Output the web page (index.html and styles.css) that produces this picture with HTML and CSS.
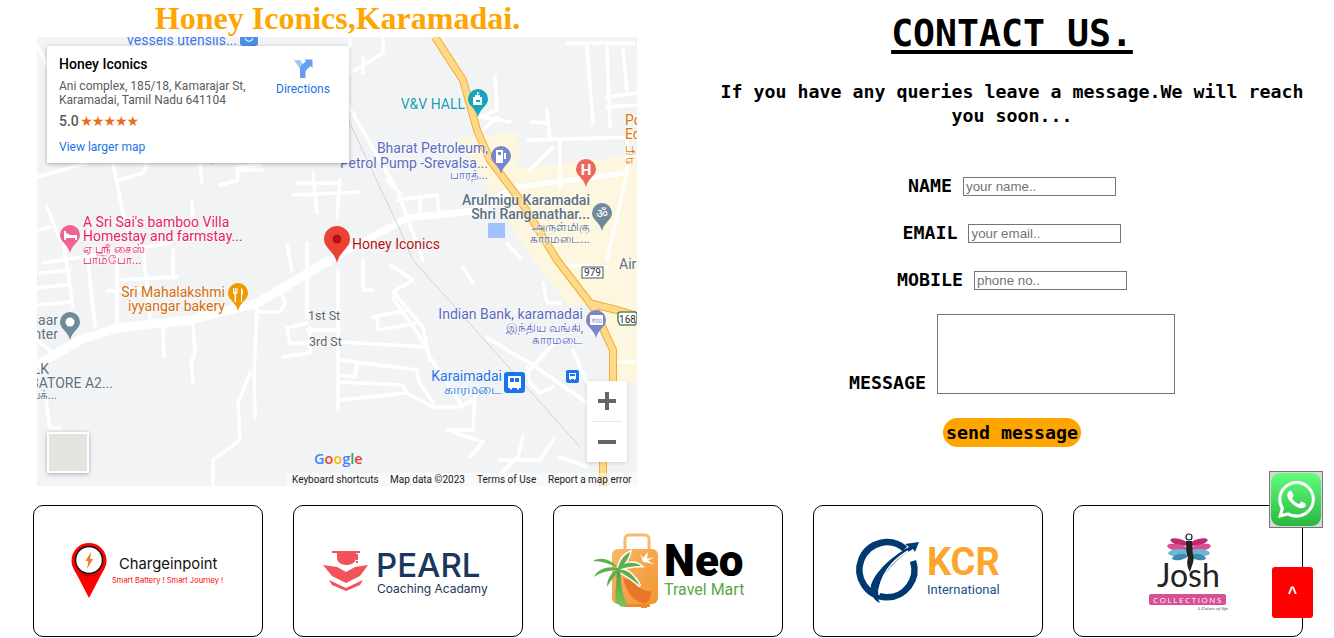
FILE: index.html
```html
<!DOCTYPE html>
<html lang="en">
<head>
    <meta charset="UTF-8">
    <meta name="viewport" content="width=device-width, initial-scale=1.0">
    <title>Contact Us - Honey Iconics</title>
    <link rel="stylesheet" href="styles.css">
</head>
<body>
    <div class="top">
        <section class="location">
            <h2 class="location-title">Honey Iconics,Karamadai.</h2>
            <div class="map">
                <!-- drawn in page coordinates, shifted by the map's own offset -->
                <svg class="map-art" width="600" height="450" viewBox="37 37 600 450">
                    <defs>
                        <path id="pin" d="M10 0a10 10 0 0 1 10 10c0 3.4-1.7 5.400-3.600 7.600-2.500 2.900-5.300 5.900-6.400 10.400-1.100-4.500-3.900-7.500-6.400-10.400C1.700 15.400 0 13.400 0 10A10 10 0 0 1 10 0z"/>
                    </defs>
                    <rect x="37" y="37" width="600" height="450" fill="#f1f3f4"/>
                    <path class="beige" d="M457 138L517 132L520 153L517 168L637 155V383H616L606 330L590 303L570 307L533 260L505 215Z"/>
                    <path class="water" d="M488 223H505V238H488Z"/>
                    <path class="roads" d="M37 45L47 65M37 177L87 163M113 163L123 213L130 233M120 180L143 173L147 163M200 163L202 183M220 185L238 180L237 167L260 165M298 183H340M313 173L317 213M293 195L360 192M340 180L337 217M192 200L193 227M47 207L60 240M37 230L50 227M63 240L73 307M43 263L170 243M40 273L70 270M37 288L67 285M37 305L70 302M88 260L95 327M117 257V323M143 247L150 318M107 291L148 288M117 280L177 277M173 250V277M163 327L164 357M193 323L195 353L191 363L193 383M257 307L254 373L255 417M250 373L238 403L240 440L213 460V486M257 312H280L285 303L280 290M287 245L292 270M307 243V317M287 328L307 323M307 330H340M287 328L290 343H310M310 327V353L283 357M338 270V410M37 340L53 353M45 393L50 428H60M383 37V53L350 73M363 57V73M350 40L347 103L397 190L423 260M495 77L497 110L480 117M483 117L510 122M483 130L497 117M547 110L550 140M532 122L548 123M528 140L637 137M567 43H633M587 47L593 123M607 47L610 127M623 50L627 90M607 97L637 93M607 107L637 105M560 140V187M530 170L553 147M398 200L437 195L440 217M420 197V213M387 180L400 193M507 243L520 257M363 260V290H373M463 267L473 283M390 265L413 280L393 292L423 327L430 360M393 298L420 337L430 357L460 403M373 317L407 310M377 317L378 330L417 323M340 342L427 347M340 360L417 370M357 363L355 377L340 375M340 382L403 385L407 393L433 407H460L473 400M340 400L407 393M417 373L420 383L433 403M475 393L473 430H447M453 432L483 442L470 457M523 437L518 457L497 477M553 440L540 460H500M560 457L587 467M487 338L530 363L573 393L588 403M527 373L557 340M527 367L530 383L540 393L553 387M543 283L547 303H560M573 350L587 383M617 362H633M560 265L607 267M627 130V173L607 260M240 170H262M250 165L258 150"/>
                    <path class="roads-main" d="M37 365L80 340L117 328L190 320L257 303L330 260"/>
                    <path class="roads-mid" d="M330 260L407 218L473 211L517 187"/>
                    <path class="roads-side" d="M517 187L627 173"/>
                    <path class="rail" d="M347 117L400 230L413 260L580 447"/>
                    <path class="highway-edge" d="M435 37L463 80L477 130L490 160L520 200L557 260L593 307L613 350V383M603 462V487M588 303L617 310L637 316"/>
                    <path class="highway" d="M435 37L463 80L477 130L490 160L520 200L557 260L593 307L613 350V383M603 462V487M588 303L617 310L637 316"/>

                    <rect class="shop" x="240" y="33" width="18" height="13" rx="3"/>
                    <path d="M245 38c0 5 8 5 8 0h-1c0 3.500-6 3.500-6 0z" fill="#fff"/>
                    <path class="shop" d="M209 158h8l-4 6z"/>
                    <text class="lbl lbl-blue" x="237" y="45" text-anchor="end">vessels utensils...</text>

                    <use href="#pin" x="468" y="89" class="pin-teal"/>
                    <path d="M473 105V97h2v-2h2v-3l3 1-2 1v1h2v2h2v8zM476 100v2h4v-2z" fill="#fff"/>
                    <text class="lbl lbl-teal" x="465" y="109" text-anchor="end">V&amp;V HALL</text>

                    <use href="#pin" x="491" y="146" class="pin-purple"/>
                    <path d="M496 150h7v13h-7zM498 152v3h3v-3zM504 153h2v6h-2z" fill="#fff"/>
                    <text class="lbl lbl-purple" x="488" y="153" text-anchor="end">Bharat Petroleum,</text>
                    <text class="lbl lbl-purple" x="488" y="168" text-anchor="end">Petrol Pump -Srevalsa...</text>
                    <text class="lbl-sm lbl-purple" x="488" y="179" text-anchor="end">பாரத்...</text>

                    <use href="#pin" x="576" y="159" class="pin-red"/>
                    <text class="pin-letter" x="586" y="175" text-anchor="middle">H</text>

                    <use href="#pin" x="592" y="203" class="pin-slate"/>
                    <text class="pin-om" x="602" y="218" text-anchor="middle">ॐ</text>
                    <text class="lbl lbl-slate lbl-bold" x="590" y="205" text-anchor="end">Arulmigu Karamadai</text>
                    <text class="lbl lbl-slate lbl-bold" x="590" y="219" text-anchor="end">Shri Ranganathar...</text>
                    <text class="lbl-sm lbl-slate" x="590" y="231" text-anchor="end">அருள்மிகு</text>
                    <text class="lbl-sm lbl-slate" x="590" y="243" text-anchor="end">காரமடை...</text>

                    <use href="#pin" x="60" y="225" class="pin-pink"/>
                    <path d="M64 231v9h2v-2h9v2h2v-5h-8v-1l-3-1v-2z" fill="#fff"/>
                    <text class="lbl lbl-pink" x="83" y="227">A Sri Sai's bamboo Villa</text>
                    <text class="lbl lbl-pink" x="83" y="241">Homestay and farmstay...</text>
                    <text class="lbl-sm lbl-pink" x="83" y="253">ஏ ஸ்ரீ சைஸ்</text>
                    <text class="lbl-sm lbl-pink" x="83" y="264">பாம்போ...</text>

                    <use href="#pin" x="228" y="283" class="pin-orange"/>
                    <path d="M233 288v5l1.500 1.500V302h1.500v-7.500l1.500-1.500v-5h-1v4h-.8v-4h-1v4H234v-4zM241 288c1.800.5 2 3 2 5v1.500h-1V302h-1z" fill="#fff"/>
                    <text class="lbl lbl-orange" x="225" y="297" text-anchor="end">Sri Mahalakshmi</text>
                    <text class="lbl lbl-orange" x="225" y="311" text-anchor="end">iyyangar bakery</text>

                    <use href="#pin" x="60" y="312" class="pin-slate"/>
                    <circle cx="70" cy="322" r="4.500" fill="#fff"/>
                    <text class="lbl lbl-slate" x="58" y="325" text-anchor="end">Baar</text>
                    <text class="lbl lbl-slate" x="58" y="339" text-anchor="end">Center</text>
                    <text class="lbl lbl-slate" x="49" y="374" text-anchor="end">ELK</text>
                    <text class="lbl lbl-slate" x="113" y="388" text-anchor="end">COIMBATORE A2...</text>
                    <text class="lbl-sm lbl-slate" x="57" y="399" text-anchor="end">கோவைக்...</text>

                    <text class="lbl-street" x="308" y="320">1st St</text>
                    <text class="lbl-street" x="309" y="346">3rd St</text>

                    <use href="#pin" x="586" y="310" class="pin-purple"/>
                    <rect x="590" y="315" width="13" height="10" rx="1" fill="#fff"/>
                    <text class="pin-bank" x="597" y="323" text-anchor="middle">₹00</text>
                    <text class="lbl lbl-purple" x="583" y="319" text-anchor="end">Indian Bank, karamadai</text>
                    <text class="lbl-sm lbl-purple" x="583" y="332" text-anchor="end">இந்திய வங்கி,</text>
                    <text class="lbl-sm lbl-purple" x="583" y="344" text-anchor="end">காரமடை</text>

                    <rect class="bus-stop" x="504" y="372" width="21" height="21" rx="3"/>
                    <path d="M509 376h11a1 1 0 0 1 1 1v11h-2v1.500h-2V388h-5v1.500h-2V388h-2v-11a1 1 0 0 1 1-1zM510 378v4h4v-4zM515 378v4h4v-4z" fill="#fff"/>
                    <rect class="bus-stop" x="566" y="370" width="13" height="13" rx="2"/>
                    <path d="M569 373h7v6h-1v1h-1v-1h-3v1h-1v-1h-1zM570 374v2h5v-2z" fill="#fff"/>
                    <text class="lbl lbl-bus" x="502" y="381" text-anchor="end">Karaimadai</text>
                    <text class="lbl lbl-bus" x="502" y="394" text-anchor="end">காரமடை</text>

                    <text class="lbl lbl-slate" x="619" y="269">Air</text>
                    <text class="lbl lbl-edu" x="625" y="125">Po</text>
                    <text class="lbl lbl-edu" x="625" y="139">Ed</text>
                    <text class="lbl-sm lbl-edu" x="625" y="152">பூ</text>
                    <text class="lbl-sm lbl-edu" x="625" y="164">எ</text>

                    <rect class="shield" x="582" y="267" width="21" height="11"/>
                    <text class="shield-text" x="592.500" y="276" text-anchor="middle">979</text>
                    <path class="shield-green" d="M618 313l2-1h15l2 1v8l-2 4h-15l-2-4z"/>
                    <text class="shield-text" x="627.500" y="323" text-anchor="middle">168</text>

                    <path class="marker" d="M337 226a13 13 0 0 1 13 13c0 4.500-2.500 7.200-5 10.400-3.200 3.800-6.500 7-8 13.600-1.500-6.600-4.800-9.800-8-13.600-2.500-3.200-5-5.900-5-10.400a13 13 0 0 1 13-13z"/>
                    <circle cx="337" cy="239" r="4.500" fill="#b31412"/>
                    <text class="lbl lbl-marker" x="352" y="249">Honey Iconics</text>

                    <text class="map-logo" x="314" y="464"><tspan fill="#4285f4">G</tspan><tspan fill="#ea4335">o</tspan><tspan fill="#fbbc04">o</tspan><tspan fill="#4285f4">g</tspan><tspan fill="#34a853">l</tspan><tspan fill="#ea4335">e</tspan></text>
                    <rect x="287" y="473" width="350" height="14" fill="#fff" fill-opacity=".5"/>
                    <text class="map-foot" x="292" y="483">Keyboard shortcuts</text>
                    <text class="map-foot" x="390" y="483">Map data ©2023</text>
                    <text class="map-foot" x="477" y="483">Terms of Use</text>
                    <text class="map-foot" x="548" y="483">Report a map error</text>
                </svg>

                <div class="place-card">
                    <div class="place-info">
                        <div class="place-name">Honey Iconics</div>
                        <div class="place-address">Ani complex, 185/18, Kamarajar St, Karamadai, Tamil Nadu 641104</div>
                        <div class="place-rating">5.0 <span class="stars">★★★★★</span></div>
                        <a class="place-link">View larger map</a>
                    </div>
                    <div class="place-directions">
                        <svg width="20" height="20" viewBox="0 0 20 20">
                            <path d="M1 1h6l5 7v11H7V10z" fill="#a6c8f5"/>
                            <path d="M7 19V10c0-3 2-4.500 4-6l2-2-2-1.500h8.500V9L17.500 7l-2 2C13 11 12.500 12 12.500 14v5z" fill="#669df6"/>
                        </svg>
                        <span>Directions</span>
                    </div>
                </div>
                <div class="pegman"></div>
                <div class="zoom-box">
                    <svg width="40" height="81" viewBox="0 0 40 81">
                        <path d="M18 11h4v7h7v4h-7v7h-4v-7h-7v-4h7z" fill="#666"/>
                        <path d="M5 40.500h30" stroke="#e6e6e6"/>
                        <path d="M11 59h18v4H11z" fill="#666"/>
                    </svg>
                </div>
            </div>
        </section>

        <section class="contact">
            <h1 class="contact-title">CONTACT US.</h1>
            <p class="contact-text">If you have any queries leave a message.We will reach you soon...</p>
            <form class="contact-form">
                <div class="form-row"><label>NAME</label><input type="text" placeholder="your name.."></div>
                <div class="form-row"><label>EMAIL</label><input type="text" placeholder="your email.."></div>
                <div class="form-row"><label>MOBILE</label><input type="text" placeholder="phone no.."></div>
                <div class="form-row form-row-message"><label>MESSAGE</label><textarea></textarea></div>
                <button class="send-btn" type="button">send message</button>
            </form>
        </section>
    </div>

    <div class="clients">
        <div class="client-card">
            <svg width="228" height="130" viewBox="34 506 228 130">
                <path d="M89 543a17.500 17.500 0 0 1 17.500 17.500c0 6-3 10-5.500 14.500l-12 23-12-23c-2.500-4.500-5.500-8.500-5.500-14.500A17.500 17.500 0 0 1 89 543z" fill="#f00"/>
                <circle cx="89" cy="560" r="13.500" fill="#fff" stroke="#111" stroke-width="1.500"/>
                <path d="M91 552l-5.500 9h3l-1.500 8 6-10h-3z" fill="#f47a1f"/>
                <path d="M80 574c5 2.500 13 2.500 18 0" fill="none" stroke="#900" stroke-width=".8"/>
                <text class="logo-charge" x="119" y="569">Chargeinpoint</text>
                <text class="logo-charge-sub" x="112" y="583">Smart Battery ! Smart Journey !</text>
            </svg>
        </div>
        <div class="client-card">
            <svg width="228" height="130" viewBox="294 506 228 130">
                <path d="M332 551h28v2h-4v5c0 4-4 7-9.500 7s-9.500-3-9.500-7v-5h-5z" fill="#f4525a"/>
                <path d="M356 554h2v6h-2zM356 561h2v2h-2z" fill="#f4525a"/>
                <path d="M323 565l14 2 9 5 9-5 13-2-8 11-14 7-14-7z" fill="#f4525a"/>
                <path d="M329 580l17 8 17-8-3 5-14 6-14-6z" fill="#f4525a"/>
                <text class="logo-pearl" x="376" y="577">PEARL</text>
                <text class="logo-pearl-sub" x="377" y="593">Coaching Acadamy</text>
            </svg>
        </div>
        <div class="client-card">
            <svg width="228" height="130" viewBox="554 506 228 130">
                <defs>
                    <linearGradient id="bag-fill" x1="0" y1="0" x2="1" y2="1">
                        <stop offset="0" stop-color="#fbb768"/>
                        <stop offset="1" stop-color="#f19530"/>
                    </linearGradient>
                    <linearGradient id="trunk-fill" x1="0" y1="0" x2="0" y2="1">
                        <stop offset="0" stop-color="#4f9f3f"/>
                        <stop offset="1" stop-color="#7cc25a"/>
                    </linearGradient>
                </defs>
                <path d="M625 550v-11a4 4 0 0 1 4-4h16a4 4 0 0 1 4 4v11" fill="none" stroke="#fbb868" stroke-width="3"/>
                <rect x="612" y="549" width="46" height="55" rx="6" fill="url(#bag-fill)"/>
                <path d="M624 604h26v3h-3v1h-6v-1h-17zM628 604h-8" fill="#f0892a"/>
                <path d="M623 578c3 12 9 22 19 25 6 0 9-2 9-12-6 1-14-3-19-11z" fill="#e8752a"/>
                <path d="M640 553l3 5 5-6-1 7 7-2-6 4 7 3-12-2z" fill="#fff"/>
                <g class="palm-halo">
                    <path d="M618 568C625 561 636 562 641 566C633 566 625 567 619 570z"/>
                    <path d="M619 570C628 568 636 578 640 586C633 580 626 575 618 571z"/>
                    <path d="M618 568C620 560 625 554 630 552C629 558 625 564 619 569z"/>
                </g>
                <path d="M616 569c2 13-2 23 0 34l6 4 6-2c-7-10-7-25-8-36z" fill="url(#trunk-fill)"/>
                <g class="palm">
                    <path d="M618 568C610 558 600 557 593 561C602 561 610 564 618 568z"/>
                    <path d="M618 568C606 565 596 571 594 577C601 572 610 570 618 570z"/>
                    <path d="M618 569C610 573 607 580 607 587C611 580 615 575 619 571z"/>
                    <path d="M618 568C620 560 625 554 630 552C629 558 625 564 619 569z"/>
                    <path d="M618 568C625 561 636 562 641 566C633 566 625 567 619 570z"/>
                    <path d="M619 570C628 568 636 578 640 586C633 580 626 575 618 571z"/>
                </g>
                <text class="logo-neo" x="664" y="576">Neo</text>
                <text class="logo-neo-sub" x="664" y="595">Travel Mart</text>
            </svg>
        </div>
        <div class="client-card">
            <svg width="228" height="130" viewBox="814 506 228 130">
                <path d="M905 549A27.500 27.500 0 1 0 913 561" fill="none" stroke="#003a70" stroke-width="6.500"/>
                <path d="M919 542l-14 2 4 3c-17 9-34 25-38 38-2 7 2 15 9 18-4-7-2-18 4-27 7-11 19-22 29-27l2 3z" fill="#003a70"/>
                <path d="M908 551c-15 9-29 24-29 44" fill="none" stroke="#fff" stroke-width="1.500"/>
                <text class="logo-kcr" x="927" y="575">KCR</text>
                <text class="logo-kcr-sub" x="927" y="594">International</text>
            </svg>
        </div>
        <div class="client-card">
            <svg width="228" height="130" viewBox="1074 506 228 130">
                <ellipse cx="1179" cy="542" rx="9" ry="3" transform="rotate(15 1179 542)" fill="#c2286f"/>
                <ellipse cx="1177" cy="547.500" rx="10" ry="3.500" transform="rotate(10 1177 547.500)" fill="#d94f94"/>
                <ellipse cx="1178" cy="552.500" rx="10" ry="3.500" transform="rotate(-5 1178 552.500)" fill="#6cb8d0"/>
                <ellipse cx="1180" cy="557" rx="8" ry="3" transform="rotate(-10 1180 557)" fill="#3f8bac"/>
                <ellipse cx="1199" cy="542" rx="9" ry="3" transform="rotate(-15 1199 542)" fill="#c2286f"/>
                <ellipse cx="1201" cy="547.500" rx="10" ry="3.500" transform="rotate(-10 1201 547.500)" fill="#d94f94"/>
                <ellipse cx="1200" cy="552.500" rx="10" ry="3.500" transform="rotate(5 1200 552.500)" fill="#6cb8d0"/>
                <ellipse cx="1198" cy="557" rx="8" ry="3" transform="rotate(10 1198 557)" fill="#3f8bac"/>
                <circle cx="1189" cy="537" r="3" fill="none" stroke="#222" stroke-width="1.200"/>
                <path d="M1186 541h6c1 5 0 9 1 14 2 5-1 10-3 17-2-3-4-9-2-14-2-5-2-11-2-17z" fill="#222"/>
                <text class="logo-josh" x="1157" y="587">Josh</text>
                <rect x="1149" y="594" width="77" height="11" rx="2" fill="#d94f94"/>
                <text class="logo-josh-bar" x="1188" y="602.500" text-anchor="middle">COLLECTIONS</text>
                <text class="logo-josh-tag" x="1197" y="610">A Colors of life</text>
            </svg>
        </div>
    </div>

    <a class="whatsapp-btn">
        <span class="whatsapp-icon">
            <svg width="37" height="37" viewBox="0 0 24 24">
                <path d="M17.472 14.382c-.297-.149-1.758-.867-2.03-.967-.273-.099-.471-.148-.67.15-.197.297-.767.966-.94 1.164-.173.199-.347.223-.644.075-.297-.15-1.255-.463-2.39-1.475-.883-.788-1.48-1.761-1.653-2.059-.173-.297-.018-.458.13-.606.134-.133.298-.347.446-.52.149-.174.198-.298.298-.497.099-.198.05-.371-.025-.52-.075-.149-.669-1.612-.916-2.207-.242-.579-.487-.5-.669-.51-.173-.008-.371-.01-.57-.01-.198 0-.52.074-.792.372-.272.297-1.04 1.016-1.04 2.479 0 1.462 1.065 2.875 1.213 3.074.149.198 2.096 3.2 5.077 4.487.709.306 1.262.489 1.694.625.712.227 1.36.195 1.871.118.571-.085 1.758-.719 2.006-1.413.248-.694.248-1.289.173-1.413-.074-.124-.272-.198-.57-.347m-5.421 7.403h-.004a9.87 9.87 0 01-5.031-1.378l-.361-.214-3.741.982.998-3.648-.235-.374a9.86 9.86 0 01-1.51-5.26c.001-5.45 4.436-9.884 9.888-9.884 2.64 0 5.122 1.03 6.988 2.898a9.825 9.825 0 012.893 6.994c-.003 5.45-4.437 9.884-9.885 9.884m8.413-18.297A11.815 11.815 0 0012.05 0C5.495 0 .16 5.335.157 11.892c0 2.096.547 4.142 1.588 5.945L.057 24l6.305-1.654a11.882 11.882 0 005.683 1.448h.005c6.554 0 11.89-5.335 11.893-11.893a11.821 11.821 0 00-3.48-8.413z" fill="#fff"/>
            </svg>
        </span>
    </a>
    <a class="scroll-top">^</a>
</body>
</html>
```

FILE: styles.css
```css
body {
    margin: 0;
    padding: 0;
    background: #fff;
    font-family: "Liberation Sans", Arial, sans-serif;
}

.top {
    display: flex;
    height: 505px;
}

.location {
    width: 675px;
    flex-shrink: 0;
}

.location-title {
    margin: 0;
    height: 37px;
    font-family: "Liberation Serif", serif;
    font-size: 32px;
    line-height: 36px;
    font-weight: bold;
    color: #ffa500;
    text-align: center;
}

.map {
    position: relative;
    width: 600px;
    height: 449px;
    margin-left: 37px;
    overflow: hidden;
}

.map-art {
    display: block;
    font-family: Roboto, sans-serif;
}

/* map drawing */
.beige { fill: #fef7e0; }
.water { fill: #a0c3ff; }
.roads { fill: none; stroke: #fff; stroke-width: 3.5; stroke-linecap: round; stroke-linejoin: round; }
.roads-main { fill: none; stroke: #fff; stroke-width: 9; stroke-linejoin: round; }
.roads-mid { fill: none; stroke: #fff; stroke-width: 7; stroke-linejoin: round; }
.roads-side { fill: none; stroke: #fff; stroke-width: 5; }
.rail { fill: none; stroke: #d0d3d6; stroke-width: 1; }
.highway-edge { fill: none; stroke: #f9ab2f; stroke-width: 8; stroke-linejoin: round; }
.highway { fill: none; stroke: #fdd98c; stroke-width: 6; stroke-linejoin: round; }
.shop { fill: #4d8fe8; }
.marker { fill: #ea4335; }
.bus-stop { fill: #1a73e8; }

.pin-teal { fill: #12a5bd; }
.pin-purple { fill: #7986cb; }
.pin-red { fill: #ee675c; }
.pin-slate { fill: #6f8a99; }
.pin-pink { fill: #f06292; }
.pin-orange { fill: #f29900; }

.pin-letter { font-size: 15px; font-weight: bold; fill: #fff; }
.pin-om { font-family: "Noto Sans", "DejaVu Sans", sans-serif; font-size: 13px; fill: #fff; }
.pin-bank { font-size: 6px; fill: #7986cb; }

.lbl, .lbl-sm, .lbl-street {
    paint-order: stroke;
    stroke: rgba(255, 255, 255, 0.7);
    stroke-width: 1.5px;
}

.lbl { font-size: 14px; }
.lbl-bold { font-weight: 500; }
.lbl-sm { font-size: 12px; }
.lbl-street { font-size: 12.5px; fill: #5f6368; }

.lbl-blue { fill: #3b78e7; }
.lbl-teal { fill: #129eaf; }
.lbl-purple { fill: #5c6bc0; }
.lbl-slate { fill: #5b7080; }
.lbl-pink { fill: #e91e63; }
.lbl-orange { fill: #d56e0c; }
.lbl-bus { fill: #1a73e8; }
.lbl-edu { fill: #e37400; }
.lbl-marker { fill: #b31412; }

.shield { fill: #fff; stroke: #555; stroke-width: 1; }
.shield-green { fill: #fff; stroke: #4f8a5b; stroke-width: 1.5; }
.shield-text { font-size: 10px; fill: #333; }

.map-logo { font-family: "Open Sans", sans-serif; font-size: 14.5px; font-weight: 600; }
.map-foot { font-size: 10px; fill: #222; }

/* map overlays */
.place-card {
    position: absolute;
    left: 10px;
    top: 9px;
    width: 302px;
    height: 117px;
    box-sizing: border-box;
    padding: 10px 12px;
    display: flex;
    background: #fff;
    box-shadow: 0 1px 4px rgba(0, 0, 0, 0.3);
    font-family: Roboto, sans-serif;
}

.place-info {
    width: 203px;
}

.place-name {
    font-size: 14px;
    font-weight: 500;
    line-height: 16px;
    color: #000;
}

.place-address {
    margin-top: 7px;
    font-size: 12px;
    line-height: 14px;
    color: #5b5b5b;
}

.place-rating {
    margin-top: 5px;
    font-size: 14px;
    line-height: 18px;
    font-weight: 500;
    color: #5b5b5b;
}

.stars {
    font-family: "DejaVu Sans", sans-serif;
    font-size: 14px;
    letter-spacing: -1px;
    color: #e7711b;
    margin-left: -2px;
}

.place-link {
    display: block;
    margin-top: 10px;
    font-size: 12px;
    line-height: 14px;
    color: #1a73e8;
}

.place-directions {
    display: flex;
    flex-direction: column;
    align-items: center;
    margin-left: 14px;
    margin-top: 3px;
    font-size: 12px;
    line-height: 14px;
    color: #1a73e8;
}

.place-directions svg {
    margin-bottom: 3px;
}

.pegman {
    position: absolute;
    left: 10px;
    top: 395px;
    width: 38px;
    height: 37px;
    background: #e5e3df;
    border: 2px solid #fff;
    box-shadow: 0 1px 4px rgba(0, 0, 0, 0.3);
}

.zoom-box {
    position: absolute;
    left: 550px;
    top: 344px;
    width: 40px;
    height: 81px;
    background: #fff;
    box-shadow: 0 1px 4px rgba(0, 0, 0, 0.15);
}

.zoom-box svg {
    display: block;
}

/* contact form */
.contact {
    flex: 1;
    margin-left: 15px;
    padding: 0 20px;
    text-align: center;
    font-family: "DejaVu Sans Mono", monospace;
    color: #000;
}

.contact-title {
    margin: 10px 0 0;
    font-size: 36.5px;
    line-height: 48px;
    font-weight: bold;
    text-decoration: underline;
    text-decoration-thickness: 4px;
    text-underline-offset: 4px;
}

.contact-text {
    margin: 22px 0 0;
    font-size: 18.27px;
    line-height: 24px;
    font-weight: bold;
}

.contact-form {
    display: flex;
    flex-direction: column;
    align-items: center;
    gap: 28px;
    margin-top: 49px;
}

.form-row {
    display: flex;
    align-items: center;
    gap: 11px;
}

.form-row label {
    font-size: 18.27px;
    line-height: 17px;
    padding-bottom: 2px;
    font-weight: bold;
}

.form-row input {
    width: 153px;
    height: 19px;
    box-sizing: border-box;
    padding: 1px 2px;
    border: 1px solid #767676;
    font-family: "Liberation Sans", Arial, sans-serif;
    font-size: 13.33px;
}

.form-row-message {
    align-items: flex-end;
    margin-top: -4px;
}

.form-row-message label {
    padding-bottom: 3px;
}

.form-row textarea {
    width: 238px;
    height: 80px;
    box-sizing: border-box;
    border: 1px solid #767676;
    padding: 2px;
    resize: none;
    display: block;
}

.send-btn {
    width: 138px;
    height: 29px;
    margin-top: -4px;
    padding: 0;
    border: none;
    border-radius: 15px;
    background: #ffa500;
    font-family: "DejaVu Sans Mono", monospace;
    font-size: 18.27px;
    font-weight: bold;
    color: #000;
}

/* client logos */
.clients {
    display: flex;
    gap: 30px;
    padding-left: 33px;
}

.client-card {
    width: 230px;
    height: 132px;
    box-sizing: border-box;
    border: 1px solid #000;
    border-radius: 10px;
    overflow: hidden;
}

.client-card svg {
    display: block;
}

.palm { fill: #5fb04a; }
.palm-halo { fill: #fff; stroke: #fff; stroke-width: 3; }

.logo-charge { font-family: Inter, sans-serif; font-size: 14.8px; fill: #111; }
.logo-charge-sub { font-family: Inter, sans-serif; font-size: 7.5px; fill: #f00; }
.logo-pearl { font-family: Inter, sans-serif; font-size: 33px; font-weight: 500; fill: #1b365d; }
.logo-pearl-sub { font-family: Inter, sans-serif; font-size: 12px; fill: #1b365d; }
.logo-neo { font-family: Roboto, sans-serif; font-size: 44px; font-weight: 900; fill: #000; }
.logo-neo-sub { font-family: Roboto, sans-serif; font-size: 16px; fill: #5aa845; }
.logo-kcr { font-family: Roboto, sans-serif; font-size: 38px; font-weight: 700; fill: #fca62f; }
.logo-kcr-sub { font-family: Roboto, sans-serif; font-size: 13px; fill: #24508c; }
.logo-josh { font-family: Lato, sans-serif; font-size: 32px; fill: #222; }
.logo-josh-bar { font-family: "Open Sans", sans-serif; font-size: 8px; letter-spacing: 1.6px; fill: #fff; }
.logo-josh-tag { font-family: "Liberation Serif", serif; font-size: 5px; font-style: italic; fill: #333; }

/* floating buttons */
.whatsapp-btn {
    position: fixed;
    right: 11px;
    bottom: 110px;
    width: 50px;
    height: 53px;
    padding: 1px;
    display: flex;
    border: 1px solid #767676;
    background: #d9d9d9;
}

.whatsapp-icon {
    flex: 1;
    display: flex;
    align-items: center;
    justify-content: center;
    border-radius: 9px;
    background: linear-gradient(#61fd7d, #2bb741);
}

.scroll-top {
    position: fixed;
    right: 21px;
    bottom: 20px;
    width: 41px;
    height: 51px;
    display: flex;
    align-items: center;
    justify-content: center;
    border-radius: 3px;
    background: #f00;
    font-family: "Liberation Sans", Arial, sans-serif;
    font-size: 16px;
    font-weight: bold;
    color: #fff;
}
```
